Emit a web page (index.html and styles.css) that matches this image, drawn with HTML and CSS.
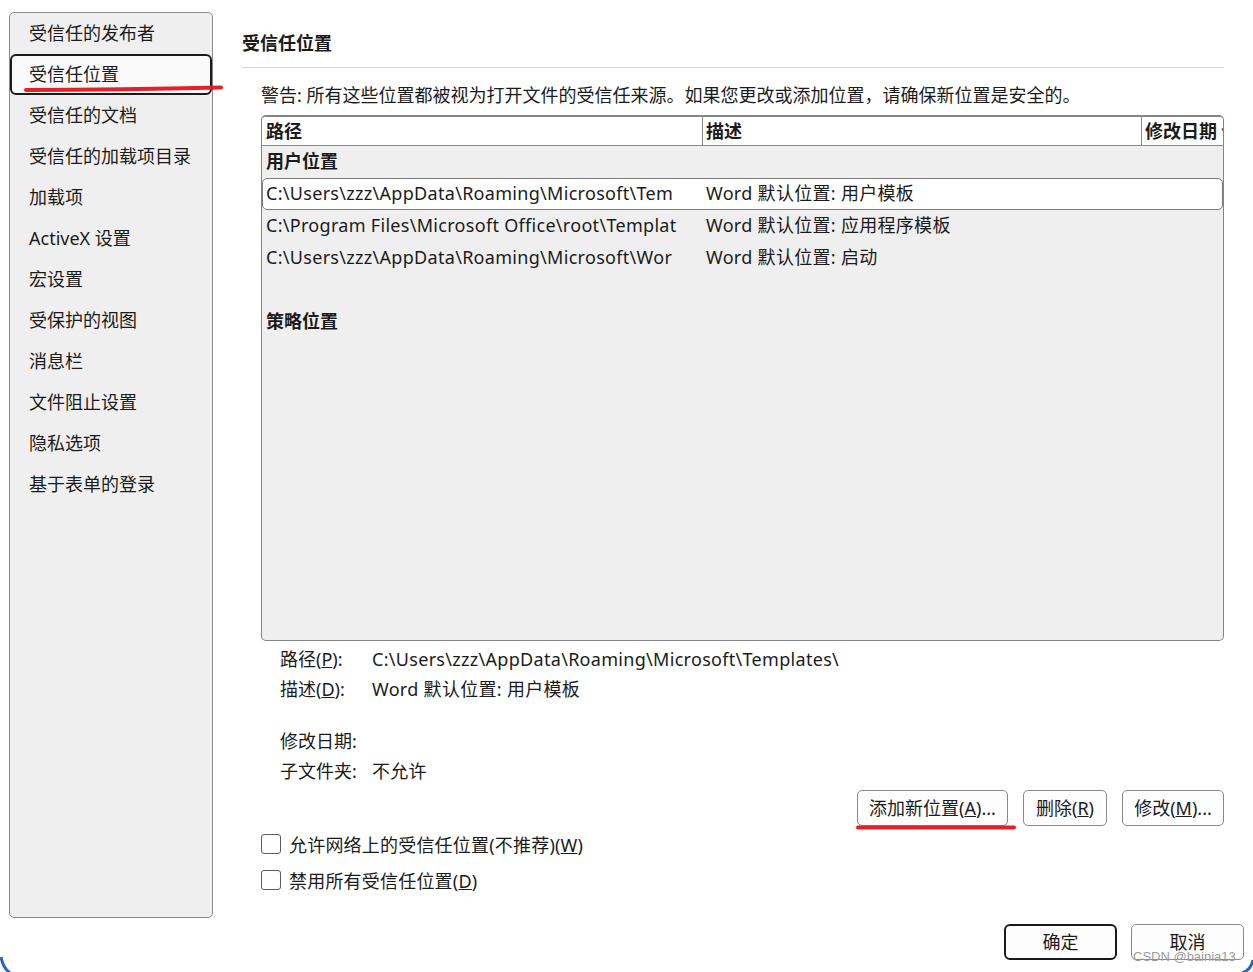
FILE: index.html
```html
<!DOCTYPE html>
<html lang="zh-CN">
<head>
<meta charset="utf-8">
<title>信任中心 - 受信任位置</title>
<link rel="stylesheet" href="styles.css">
</head>
<body>
<div class="page">
  <div class="top">
    <nav class="sidebar">
      <div class="nav-item">受信任的发布者</div>
      <div class="nav-item active">受信任位置</div>
      <div class="nav-item">受信任的文档</div>
      <div class="nav-item">受信任的加载项目录</div>
      <div class="nav-item">加载项</div>
      <div class="nav-item">ActiveX 设置</div>
      <div class="nav-item">宏设置</div>
      <div class="nav-item">受保护的视图</div>
      <div class="nav-item">消息栏</div>
      <div class="nav-item">文件阻止设置</div>
      <div class="nav-item">隐私选项</div>
      <div class="nav-item">基于表单的登录</div>
    </nav>
    <main class="main">
      <h1 class="title">受信任位置</h1>
      <p class="warning">警告: 所有这些位置都被视为打开文件的受信任来源。如果您更改或添加位置，请确保新位置是安全的。</p>
      <div class="table">
        <div class="thead">
          <div class="th c1">路径</div>
          <div class="th c2">描述</div>
          <div class="th c3">修改日期 ▾</div>
        </div>
        <div class="tbody">
          <div class="group">用户位置</div>
          <div class="row selected">
            <div class="td c1">C:\Users\zzz\AppData\Roaming\Microsoft\Tem</div>
            <div class="td c2">Word 默认位置: 用户模板</div>
          </div>
          <div class="row">
            <div class="td c1">C:\Program Files\Microsoft Office\root\Templat</div>
            <div class="td c2">Word 默认位置: 应用程序模板</div>
          </div>
          <div class="row">
            <div class="td c1">C:\Users\zzz\AppData\Roaming\Microsoft\Wor</div>
            <div class="td c2">Word 默认位置: 启动</div>
          </div>
          <div class="row"></div>
          <div class="group">策略位置</div>
        </div>
      </div>
      <div class="details">
        <div class="drow"><span class="dlabel">路径(<u>P</u>):</span><span class="dvalue">C:\Users\zzz\AppData\Roaming\Microsoft\Templates\</span></div>
        <div class="drow"><span class="dlabel">描述(<u>D</u>):</span><span class="dvalue">Word 默认位置: 用户模板</span></div>
        <div class="drow spaced"><span class="dlabel">修改日期:</span><span class="dvalue"></span></div>
        <div class="drow"><span class="dlabel">子文件夹:</span><span class="dvalue">不允许</span></div>
      </div>
      <div class="actions">
        <button class="btn btn-add">添加新位置(<u>A</u>)...</button>
        <button class="btn btn-del">删除(<u>R</u>)</button>
        <button class="btn btn-mod">修改(<u>M</u>)...</button>
      </div>
      <label class="check"><span class="box"></span><span>允许网络上的受信任位置(不推荐)(<u>W</u>)</span></label>
      <label class="check"><span class="box"></span><span>禁用所有受信任位置(<u>D</u>)</span></label>
    </main>
  </div>
  <div class="footer">
    <button class="btn btn-ok">确定</button>
    <button class="btn btn-cancel">取消</button>
  </div>
  <svg class="marks" width="1253" height="972" viewBox="0 0 1253 972">
    <path d="M26 90 Q120 89.5 221 87.5" stroke="#e5202a" stroke-width="4" fill="none" stroke-linecap="round"/>
    <path d="M858 827.5 L1014 827.5" stroke="#e5202a" stroke-width="4" fill="none" stroke-linecap="round"/>
    <path d="M1 957 Q3 968 10 973" stroke="#2a62c9" stroke-width="3" fill="none"/>
    <path d="M1253 960 Q1251 970 1242 973" stroke="#2a62c9" stroke-width="3" fill="none"/>
  </svg>
  <div class="watermark">CSDN @bainia13</div>
</div>
</body>
</html>
```
FILE: styles.css
```css
* { box-sizing: border-box; }

html, body {
  margin: 0;
  padding: 0;
  background: #ffffff;
}

body {
  font-family: "Noto Sans", "Noto Sans CJK SC", sans-serif;
  font-size: 18px;
  color: #1b1b1b;
}

.page {
  position: relative;
  width: 1253px;
  height: 972px;
  overflow: hidden;
}

.top {
  display: flex;
  align-items: flex-start;
  padding-top: 12px;
  height: 918px;
}

.sidebar {
  margin-left: 9px;
  width: 204px;
  height: 906px;
  border: 1px solid #8c8c8c;
  border-radius: 5px;
  background: #efefef;
}

.nav-item {
  height: 41px;
  line-height: 40px;
  padding-left: 19px;
  font-size: 18px;
  white-space: nowrap;
}

.nav-item.active {
  border: 2px solid #1a1a1a;
  border-radius: 6px;
  background: #fafafa;
  padding-left: 17px;
  line-height: 36px;
}

.main {
  margin-left: 29px;
  width: 982px;
}

.title {
  margin: 0;
  padding-top: 19px;
  padding-bottom: 12px;
  line-height: 24px;
  font-size: 18px;
  font-weight: bold;
  border-bottom: 1px solid #d6d6d6;
}

.warning {
  margin: 15px 0 0 19px;
  line-height: 24px;
  white-space: nowrap;
}

.table {
  margin: 8px 0 0 19px;
  width: 963px;
  height: 526px;
  border: 1px solid #858585;
  border-top-width: 2px;
  border-radius: 5px;
  background: #efefef;
  overflow: hidden;
}

.thead {
  display: flex;
  height: 29px;
  background: #ffffff;
  border-bottom: 1px solid #8a8a8a;
}

.th {
  line-height: 28px;
  font-weight: bold;
  padding-left: 4px;
  white-space: nowrap;
  overflow: hidden;
}

.th.c1 { width: 441px; border-right: 1px solid #8a8a8a; }
.th.c2 { width: 439px; border-right: 1px solid #8a8a8a; padding-left: 3px; }
.th.c3 { flex: 1; padding-left: 3px; }

.group {
  height: 32px;
  line-height: 30px;
  padding-left: 4px;
  font-weight: bold;
}

.row {
  display: flex;
  height: 32px;
  line-height: 30px;
}

.row.selected {
  background: #ffffff;
  border: 1px solid #7c7c7c;
  border-radius: 5px;
  line-height: 28px;
}

.td {
  white-space: nowrap;
  overflow: hidden;
  padding-left: 4px;
  letter-spacing: 0.3px;
}

.td.c1 { width: 440px; }
.row.selected .td.c1 { width: 439px; padding-left: 3px; }
.td.c2 { flex: 1; }

.details {
  margin-top: 3px;
  padding-left: 38px;
}

.drow {
  display: flex;
  height: 30px;
  line-height: 30px;
  white-space: nowrap;
}

.drow.spaced { margin-top: 22px; }

.dlabel { width: 92px; }

.dvalue { letter-spacing: 0.3px; }

.actions {
  margin-top: 4px;
  display: flex;
  justify-content: flex-end;
  gap: 15px;
}

.btn {
  height: 36px;
  border: 1px solid #8a8a8a;
  border-radius: 5px;
  background: #fdfdfd;
  font-family: inherit;
  font-size: 18px;
  color: #1b1b1b;
  padding: 0;
  line-height: 32px;
}

.btn-add { width: 151px; }
.btn-del { width: 84px; }
.btn-mod { width: 102px; }

.check {
  display: flex;
  align-items: center;
  height: 36px;
  padding-left: 19px;
  gap: 8px;
  white-space: nowrap;
  letter-spacing: 0.2px;
}

.box {
  width: 20px;
  height: 20px;
  border: 1.5px solid #5c5c5c;
  border-radius: 3px;
  background: #ffffff;
}

.footer {
  margin-top: 6px;
  display: flex;
  justify-content: flex-end;
  gap: 14px;
  padding-right: 9px;
}

.btn-ok {
  width: 113px;
  border: 2px solid #1a1a1a;
  border-radius: 6px;
  line-height: 30px;
}

.btn-cancel { width: 113px; }

.marks {
  position: absolute;
  top: 0;
  left: 0;
  pointer-events: none;
}

.watermark {
  position: absolute;
  left: 1133px;
  top: 948px;
  font-family: "Liberation Sans", sans-serif;
  font-size: 13px;
  line-height: 18px;
  color: #9b9b9b;
  pointer-events: none;
}
```
